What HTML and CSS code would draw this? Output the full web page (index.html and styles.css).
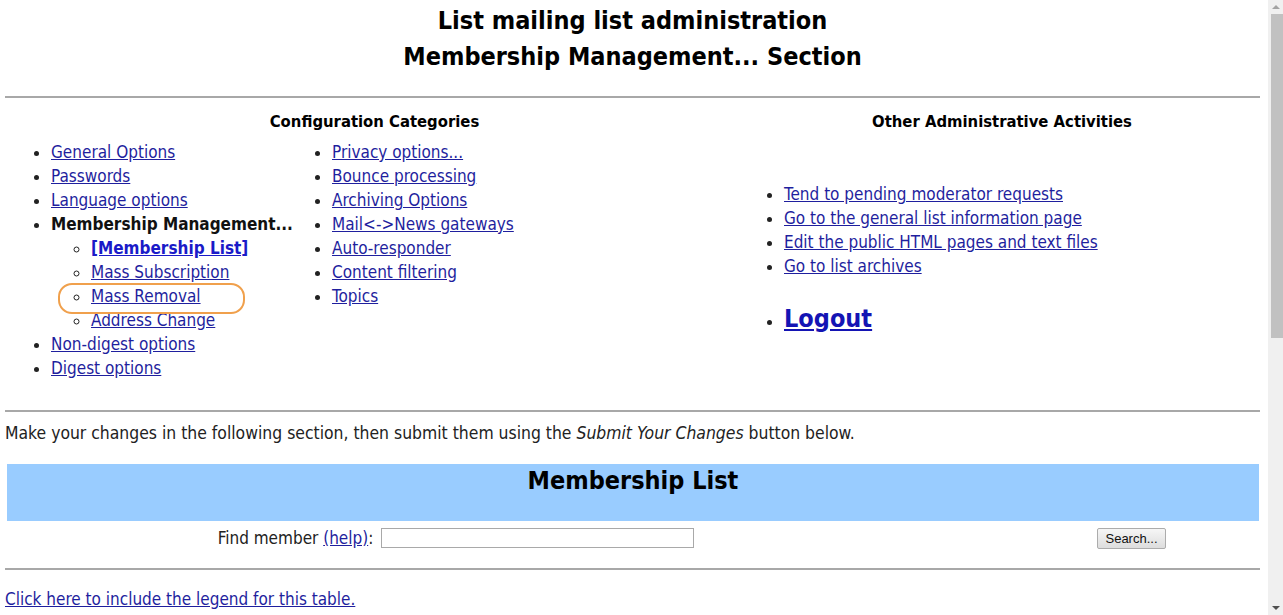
FILE: index.html
```html
<!DOCTYPE html>
<html lang="en">
<head>
    <meta charset="UTF-8">
    <title>List Administration - Membership Management... Section</title>
    <link rel="stylesheet" href="styles.css">
</head>
<body>
    <h2 class="page-title">List mailing list administration<br>Membership Management... Section</h2>
    <hr>

    <div class="nav">
        <div class="nav-left">
            <div class="nav-heading">Configuration Categories</div>
            <div class="nav-columns">
                <ul class="cat-list">
                    <li><a href="#">General Options</a></li>
                    <li><a href="#">Passwords</a></li>
                    <li><a href="#">Language options</a></li>
                    <li><strong>Membership Management...</strong>
                        <ul class="sub-list">
                            <li><a href="#" class="current">[Membership List]</a></li>
                            <li><a href="#">Mass Subscription</a></li>
                            <li class="marked"><a href="#">Mass Removal</a><span class="mark"></span></li>
                            <li><a href="#">Address Change</a></li>
                        </ul>
                    </li>
                    <li><a href="#">Non-digest options</a></li>
                    <li><a href="#">Digest options</a></li>
                </ul>
                <ul class="cat-list">
                    <li><a href="#">Privacy options...</a></li>
                    <li><a href="#">Bounce processing</a></li>
                    <li><a href="#">Archiving Options</a></li>
                    <li><a href="#">Mail&lt;-&gt;News gateways</a></li>
                    <li><a href="#">Auto-responder</a></li>
                    <li><a href="#">Content filtering</a></li>
                    <li><a href="#">Topics</a></li>
                </ul>
            </div>
        </div>
        <div class="nav-right">
            <div class="nav-heading">Other Administrative Activities</div>
            <ul class="other-list">
                <li><a href="#">Tend to pending moderator requests</a></li>
                <li><a href="#">Go to the general list information page</a></li>
                <li><a href="#">Edit the public HTML pages and text files</a></li>
                <li><a href="#">Go to list archives</a></li>
            </ul>
            <ul class="logout-list">
                <li><a href="#">Logout</a></li>
            </ul>
        </div>
    </div>

    <hr>
    <p class="intro">Make your changes in the following section, then submit them using the <em>Submit Your Changes</em> button below.</p>

    <div class="section-bar">
        <h2>Membership List</h2>
    </div>

    <form class="find-row" onsubmit="return false">
        <div class="find-field">
            <label for="findmember">Find member <a href="#">(help)</a>:</label>
            <input type="text" id="findmember" name="findmember">
        </div>
        <button type="submit" class="search-button">Search...</button>
    </form>

    <hr>
    <a href="#" class="legend-link">Click here to include the legend for this table.</a>

    <div class="scrollbar">
        <div class="scroll-arrow up"></div>
        <div class="scroll-thumb"></div>
        <div class="scroll-arrow down"></div>
    </div>
</body>
</html>
```

FILE: styles.css
```css
html, body {
    height: 100%;
}

body {
    font-family: "DejaVu Sans Condensed", "DejaVu Sans", sans-serif;
    font-size: 17px;
    line-height: 24px;
    color: #222;
    background-color: #fff;
    margin: 0;
    padding: 0 23px 0 5px;
    overflow: hidden;
}

a {
    color: #1f1f9e;
}

hr {
    border: none;
    border-top: 2px solid #a8a8a8;
    margin: 0;
}

.page-title {
    font-size: 25px;
    line-height: 36px;
    color: #000;
    text-align: center;
    margin: 3px 0 21px;
}

.nav {
    display: grid;
    grid-template-columns: 739px 1fr;
    padding-top: 12px;
    height: 300px;
}

.nav-heading {
    font-size: 16.5px;
    font-weight: bold;
    color: #000;
    text-align: center;
}

.nav-columns {
    display: grid;
    grid-template-columns: 281px 1fr;
    padding-top: 6px;
    padding-left: 6px;
}

ul {
    margin: 0;
    padding-left: 40px;
}

.cat-list strong {
    color: #111;
    white-space: nowrap;
}

.sub-list {
    list-style-type: circle;
}

.current {
    font-weight: bold;
    color: #1a1ac8;
}

.marked {
    position: relative;
}

.mark {
    position: absolute;
    left: -33px;
    top: -1px;
    width: 183px;
    height: 27px;
    border: 2px solid #f0a04c;
    border-radius: 14px;
    pointer-events: none;
}

.other-list {
    margin-top: 48px;
}

.logout-list {
    margin-top: 26px;
}

.logout-list a {
    font-size: 25px;
    font-weight: bold;
    line-height: 30px;
    color: #1414b4;
}

.intro {
    font-size: 17.4px;
    margin: 9px 0 19px;
}

.section-bar {
    background-color: #99ccff;
    margin: 0 1px 0 2px;
    height: 57px;
}

.section-bar h2 {
    font-size: 25px;
    line-height: 34px;
    color: #000;
    text-align: center;
    margin: 0;
}

.find-row {
    display: flex;
    align-items: center;
    height: 28px;
    margin: 3px 0 16px;
}

.find-field {
    width: 902px;
    display: flex;
    justify-content: center;
    align-items: center;
    gap: 8px;
}

.find-field label {
    color: #222;
}

.find-field input {
    width: 313px;
    height: 20px;
    box-sizing: border-box;
    border: 1px solid #a9a9a9;
    padding: 0 3px;
    font-size: 13px;
}

.search-button {
    margin-left: 190px;
    width: 69px;
    height: 21px;
    padding: 0;
    font-family: "Liberation Sans", Arial, sans-serif;
    font-size: 13px;
    color: #111;
    background: linear-gradient(#f6f6f6, #dddddd);
    border: 1px solid #acacac;
    border-radius: 2px;
}

.legend-link {
    display: inline-block;
    margin-top: 17px;
}

.scrollbar {
    position: fixed;
    top: 0;
    right: 0;
    width: 15px;
    height: 100%;
    background-color: #f0f0f0;
    display: flex;
    flex-direction: column;
    align-items: flex-end;
}

.scroll-thumb {
    width: 12px;
    height: 324px;
    background-color: #c1c1c1;
}

.scroll-arrow {
    width: 15px;
    height: 14px;
    display: flex;
    align-items: center;
    justify-content: center;
}

.scroll-arrow.down {
    margin-top: auto;
}

.scroll-arrow::before {
    content: "";
    border-left: 4px solid transparent;
    border-right: 4px solid transparent;
}

.scroll-arrow.up::before {
    border-bottom: 4px solid #a3a3a3;
}

.scroll-arrow.down::before {
    border-top: 4px solid #505050;
}
```
